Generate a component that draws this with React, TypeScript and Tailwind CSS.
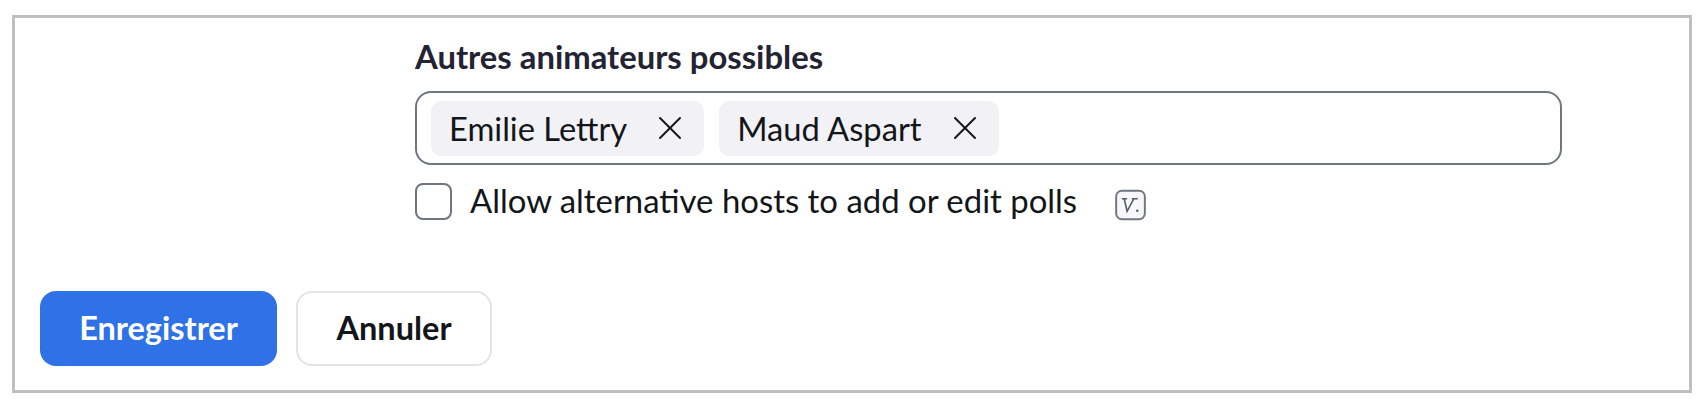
import React from 'react';
import { X } from 'lucide-react';

const Chip: React.FC<{ name: string }> = ({ name }) => (
    <div className="flex h-[55px] items-center gap-[23px] rounded-[10px] bg-[#f1f1f6] pl-[18px] pr-[14px]">
        <span className="mt-[2px] text-[32.7px] leading-none text-[#131619]">{name}</span>
        <X size={40} strokeWidth={1.2} className="text-[#131619]" />
    </div>
);

export default function App() {
    return (
        <div className="h-[406px] w-[1708px] bg-white pl-[12px] pt-[15px] font-['Lato','Liberation_Sans',sans-serif]">
            <div className="h-[378px] w-[1680px] border-[3px] border-[#bfbfbf] bg-white pl-[25px] pt-[21px]">
                <div className="ml-[375px] w-[1147px]">
                    <h2 className="text-[32.8px] font-bold leading-[36px] text-[#232333]">Autres animateurs possibles</h2>
                    <div className="mt-[16px] flex h-[74px] items-center gap-[15px] rounded-[16px] border-2 border-[#6e7680] pl-[14px]">
                        <Chip name="Emilie Lettry" />
                        <Chip name="Maud Aspart" />
                    </div>
                    <div className="mt-[17px] flex items-center">
                        <div className="h-[37px] w-[37px] rounded-[8px] border-2 border-[#6e7680] bg-white" />
                        <span className="mb-[2px] ml-[18px] text-[32.9px] leading-[37px] text-[#131619]">Allow alternative hosts to add or edit polls</span>
                        {/* keyboard hint */}
                        <svg width="31" height="32" viewBox="0 0 32 32" fill="none" className="ml-[38px] mt-[6px]">
                            <rect x="1.2" y="1.2" width="29.6" height="29.6" rx="6" fill="#f7f7fa" stroke="#6e7680" strokeWidth="2" />
                            <path d="M7 9.5h5.5M9.5 9.5l3 13 7-13M17.5 9.5h6" stroke="#555b64" strokeWidth="1.6" />
                            <circle cx="23" cy="22" r="1.3" fill="#555b64" />
                        </svg>
                    </div>
                </div>
                <div className="mt-[70px] flex gap-[19px]">
                    <button className="h-[75px] w-[237px] rounded-[16px] bg-[#2f72e8] text-[32.5px] font-bold text-white">Enregistrer</button>
                    <button className="h-[75px] w-[196px] rounded-[16px] border-2 border-[#e1e4e9] bg-white text-[32.5px] font-bold text-[#131619]">Annuler</button>
                </div>
            </div>
        </div>
    );
}
